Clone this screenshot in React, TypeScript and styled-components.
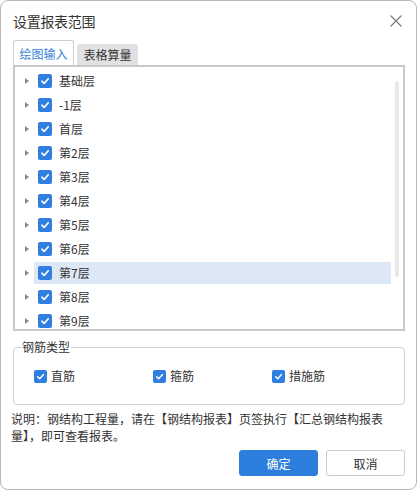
import React from "react";
import styled, { createGlobalStyle } from "styled-components";

const Global = createGlobalStyle`
  html, body { margin: 0; padding: 0; background: #ffffff; }
  body { font-family: "Noto Sans CJK SC", "Noto Sans", sans-serif; color: #333; }
  * { box-sizing: border-box; }
`;

const Dialog = styled.div`
  width: 417px;
  height: 490px;
  border: 1px solid #b8b8b8;
  border-radius: 8px;
  background: #fff;
  padding: 0 11px 0 12px;
  display: flex;
  flex-direction: column;
  overflow: hidden;
`;

const Header = styled.div`
  height: 39px;
  display: flex;
  align-items: center;
  justify-content: space-between;
`;

const Title = styled.div`
  font-size: 14px;
  line-height: 20px;
  color: #333;
  letter-spacing: -0.3px;
`;

const Close = styled.button`
  border: none;
  background: none;
  padding: 0;
  width: 14px;
  height: 14px;
  margin-right: 2px;
  display: flex;
  align-items: center;
  justify-content: center;
  cursor: pointer;
`;

const Tabs = styled.div`
  height: 25px;
  display: flex;
  align-items: flex-end;
  gap: 3px;
`;

const Tab = styled.div<{ $active?: boolean }>`
  width: ${(p) => (p.$active ? 61 : 61)}px;
  height: ${(p) => (p.$active ? 25 : 21)}px;
  display: flex;
  align-items: center;
  justify-content: center;
  font-size: 12px;
  line-height: 16px;
  color: ${(p) => (p.$active ? "#3a82d6" : "#333")};
  background: ${(p) => (p.$active ? "#fff" : "#e1e1e1")};
  border: ${(p) => (p.$active ? "1px solid #cfcfcf" : "none")};
  border-bottom: none;
  border-radius: 3px 3px 0 0;
  padding-top: ${(p) => (p.$active ? 1 : 0)}px;
`;

const Panel = styled.div`
  position: relative;
  height: 266px;
  border: 2px solid #c9c9c9;
  overflow: hidden;
`;

const TreeList = styled.div`
  padding-top: 3px;
  display: flex;
  flex-direction: column;
  gap: 2px;
`;

const Row = styled.div`
  display: flex;
  align-items: stretch;
  height: 22px;
`;

const ArrowCell = styled.div`
  width: 19px;
  display: flex;
  align-items: center;
  padding-left: 10px;
`;

const Arrow = styled.span`
  width: 0;
  height: 0;
  border-top: 3.5px solid transparent;
  border-bottom: 3.5px solid transparent;
  border-left: 4px solid #8a8a8a;
`;

const Node = styled.div<{ $selected?: boolean }>`
  flex: 1;
  margin-right: 12px;
  display: flex;
  align-items: center;
  gap: 7px;
  padding-left: 4px;
  background: ${(p) => (p.$selected ? "#dde8f7" : "transparent")};
`;

const Box = styled.span<{ $size: number }>`
  width: ${(p) => p.$size}px;
  height: ${(p) => p.$size}px;
  border-radius: 2px;
  background: #2f7ee0;
  display: inline-flex;
  align-items: center;
  justify-content: center;
  flex-shrink: 0;
`;

const Label = styled.span`
  font-size: 12px;
  line-height: 16px;
  color: #333;
`;

const Thumb = styled.div`
  position: absolute;
  right: 4px;
  top: 14px;
  width: 4px;
  height: 196px;
  border-radius: 2px;
  background: #e8e8e8;
`;

const Group = styled.fieldset`
  margin: 8px 0 0 0;
  padding: 0 0 18px 0;
  border: 1px solid #cfcfcf;
  border-radius: 4px;
  min-width: 0;
`;

const Legend = styled.legend`
  margin-left: 7px;
  padding: 0 1px;
  font-size: 12px;
  line-height: 16px;
  color: #333;
`;

const CheckRow = styled.div`
  margin-top: 11px;
  padding-left: 20px;
  display: grid;
  grid-template-columns: 119px 119px 1fr;
  height: 20px;
  align-items: center;
`;

const CheckItem = styled.label`
  display: flex;
  align-items: center;
  gap: 4px;
`;

const Note = styled.p`
  margin: 5px 0 0 -2px;
  width: 396px;
  font-size: 12px;
  line-height: 17px;
  color: #333;
`;

const Footer = styled.div`
  margin-top: 6px;
  display: flex;
  justify-content: flex-end;
  gap: 8px;
`;

const Button = styled.button<{ $primary?: boolean }>`
  width: 79px;
  height: 26px;
  border-radius: 3px;
  font-family: "Noto Sans CJK SC", sans-serif;
  font-size: 12px;
  border: 1px solid ${(p) => (p.$primary ? "#2e7fdd" : "#cccccc")};
  background: ${(p) => (p.$primary ? "#2e7fdd" : "#ffffff")};
  color: ${(p) => (p.$primary ? "#ffffff" : "#333")};
  padding: 0;
`;

const Check = ({ size }: { size: number }) => (
  <Box $size={size}>
    <svg width={size - 4} height={size - 4} viewBox="0 0 10 10">
      <path d="M1.8 5.2 L4.1 7.4 L8.3 2.8" fill="none" stroke="#fff" strokeWidth="1.6" strokeLinecap="round" strokeLinejoin="round" />
    </svg>
  </Box>
);

const floors = ["基础层", "-1层", "首层", "第2层", "第3层", "第4层", "第5层", "第6层", "第7层", "第8层", "第9层"];

export default function App() {
  return (
    <>
      <Global />
      <Dialog>
        <Header>
          <Title>设置报表范围</Title>
          <Close aria-label="close">
            <svg width="12" height="12" viewBox="0 0 12 12">
              <path d="M0.5 0.5 L11.5 11.5 M11.5 0.5 L0.5 11.5" stroke="#777" strokeWidth="1.1" />
            </svg>
          </Close>
        </Header>
        <Tabs>
          <Tab $active>绘图输入</Tab>
          <Tab>表格算量</Tab>
        </Tabs>
        <Panel>
          <TreeList>
            {floors.map((f, i) => (
              <Row key={f}>
                <ArrowCell>
                  <Arrow />
                </ArrowCell>
                <Node $selected={i === 8}>
                  <Check size={14} />
                  <Label>{f}</Label>
                </Node>
              </Row>
            ))}
          </TreeList>
          <Thumb />
        </Panel>
        <Group>
          <Legend>钢筋类型</Legend>
          <CheckRow>
            <CheckItem>
              <Check size={13} />
              <Label>直筋</Label>
            </CheckItem>
            <CheckItem>
              <Check size={13} />
              <Label>箍筋</Label>
            </CheckItem>
            <CheckItem>
              <Check size={13} />
              <Label>措施筋</Label>
            </CheckItem>
          </CheckRow>
        </Group>
        <Note>说明：钢结构工程量，请在【钢结构报表】页签执行【汇总钢结构报表量】，即可查看报表。</Note>
        <Footer>
          <Button $primary>确定</Button>
          <Button>取消</Button>
        </Footer>
      </Dialog>
    </>
  );
}
